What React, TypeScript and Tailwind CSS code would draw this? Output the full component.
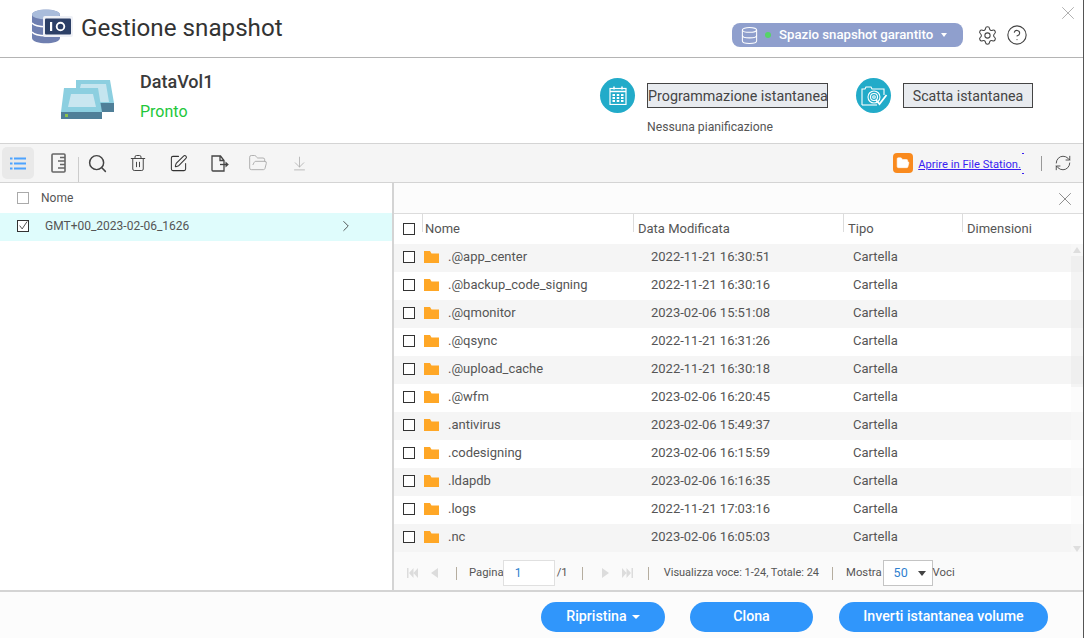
import React from "react";
import { Search, Trash2, SquarePen, FolderOpen, ArrowDownToLine, Settings, CircleHelp, X, Database, ChevronRight, RefreshCw } from "lucide-react";

const rows = [
  [".@app_center", "2022-11-21 16:30:51"],
  [".@backup_code_signing", "2022-11-21 16:30:16"],
  [".@qmonitor", "2023-02-06 15:51:08"],
  [".@qsync", "2022-11-21 16:31:26"],
  [".@upload_cache", "2022-11-21 16:30:18"],
  [".@wfm", "2023-02-06 16:20:45"],
  [".antivirus", "2023-02-06 15:49:37"],
  [".codesigning", "2023-02-06 16:15:59"],
  [".ldapdb", "2023-02-06 16:16:35"],
  [".logs", "2022-11-21 17:03:16"],
  [".nc", "2023-02-06 16:05:03"],
];

function Box() {
  return <span className="block w-[12px] h-[12px] border border-[#333] bg-white shrink-0" />;
}

function Folder() {
  return (
    <svg width="15" height="12" viewBox="0 0 15 12" className="block shrink-0">
      <path d="M0 0h6l1.500 2.500H15V12H0z" fill="#ffa726" />
    </svg>
  );
}

function AppLogo() {
  return (
    <svg width="42" height="35" viewBox="0 0 42 35" className="block">
      <path d="M1 6c0-7 28-7 28 0v23c0 7-28 7-28 0z" fill="#6f7fb0" />
      <ellipse cx="15" cy="5.500" rx="14" ry="5" fill="#a9bcdb" />
      <path d="M1 14c4 5 24 5 28 0M1 23c4 5 24 5 28 0" stroke="#fff" strokeWidth="1.400" fill="none" />
      <rect x="12" y="7" width="30" height="21" rx="2" fill="#eef0f6" />
      <rect x="14" y="9.500" width="26" height="16" rx="1" fill="#2c3f66" />
      <rect x="19" y="13" width="2.200" height="9" fill="#fff" />
      <circle cx="29.500" cy="17.500" r="3.800" fill="none" stroke="#fff" strokeWidth="1.900" />
    </svg>
  );
}

function VolumeIcon() {
  return (
    <svg width="54" height="41" viewBox="0 0 54 41" className="block">
      <path d="M15 1h34l4 23v9H39L37 9H15z" fill="#8ccfe0" />
      <path d="M20 5h25l3 18H38L36 9H19z" fill="#c5e5ef" />
      <rect x="39" y="24" width="14" height="9" fill="#4f7f98" />
      <path d="M3 9h34l4 24H0z" fill="#8ccfe0" />
      <path d="M10 15h22l3 13H7z" fill="#c9e6f0" />
      <rect x="0" y="33" width="41" height="7" fill="#4f7f98" />
      <rect x="4" y="35" width="3" height="3" fill="#8bc34a" />
    </svg>
  );
}

function CalendarIcon() {
  return (
    <svg width="18" height="19" viewBox="0 0 18 19" fill="none" className="block">
      <rect x="1" y="2.500" width="16" height="16" stroke="#fff" strokeWidth="1.200" />
      <path d="M1 5.500h16" stroke="#fff" strokeWidth="1.500" />
      <path d="M5 0.500v3M13 0.500v3" stroke="#fff" strokeWidth="1.500" />
      <path d="M3.500 8h2.500v2H3.500zM7.750 8h2.500v2h-2.500zM12 8h2.500v2H12zM3.500 11h2.500v2H3.500zM7.750 11h2.500v2h-2.500zM12 11h2.500v2H12zM3.500 14h2.500v2H3.500zM7.750 14h2.500v2h-2.500zM12 14h2.500v2H12z" fill="#fff" />
    </svg>
  );
}

function SnapIcon() {
  return (
    <svg width="28" height="22" viewBox="0 0 28 22" fill="none" stroke="#fff" strokeWidth="1.100" className="block">
      <path d="M2 20V4h3l1-2h5l1 2h12v6" />
      <path d="M2 20h15" />
      <circle cx="14" cy="12" r="6" />
      <circle cx="14" cy="12" r="3.500" />
      <circle cx="14" cy="12" r="1.300" />
      <path d="M16 15l3.500 4 7-9" strokeWidth="1.800" />
    </svg>
  );
}

function ListIcon() {
  return (
    <svg width="16" height="13" viewBox="0 0 16 13" fill="#4da3ff" className="block">
      <rect x="0" y="0.500" width="2.500" height="2" />
      <rect x="4" y="0.500" width="12" height="2" />
      <rect x="0" y="5.500" width="2.500" height="2" />
      <rect x="4" y="5.500" width="12" height="2" />
      <rect x="0" y="10.500" width="2.500" height="2" />
      <rect x="4" y="10.500" width="12" height="2" />
    </svg>
  );
}

function RulerIcon() {
  return (
    <svg width="15" height="20" viewBox="0 0 15 20" fill="none" stroke="#666" strokeWidth="1.600" className="block">
      <rect x="1" y="1" width="13" height="18" rx="1" />
      <path d="M9 4.500h5M7 8h7M9 11.500h5M7 15h7" />
    </svg>
  );
}

function ExportIcon() {
  return (
    <svg width="18" height="17" viewBox="0 0 18 17" fill="none" stroke="#444" strokeWidth="1.300" className="block">
      <path d="M13 5.500V16H2a1 1 0 0 1-1-1V1h8.500zM9 1v4.500h4" />
      <path d="M9 9.500h6" />
      <path d="M14.500 6.500l3.300 3-3.300 3z" fill="#444" stroke="none" />
    </svg>
  );
}

function Triangles({ dir, double }: { dir: "l" | "r"; double?: boolean }) {
  const p = dir === "l" ? "M7 0v10L0 5z" : "M0 0v10l7-5z";
  return (
    <svg width={double ? 11 : 7} height="10" viewBox={double ? "0 0 11 10" : "0 0 7 10"} fill="#dcdcdc" className="block">
      {double ? (
        dir === "l" ? (
          <>
            <rect x="0" y="0" width="1.500" height="10" />
            <path d="M6.500 0v10L2 5zM11 0v10L6.500 5z" />
          </>
        ) : (
          <>
            <path d="M0 0v10l4.500-5zM4.500 0v10L9 5z" />
            <rect x="9.500" y="0" width="1.500" height="10" />
          </>
        )
      ) : (
        <path d={p} />
      )}
    </svg>
  );
}

function Sep() {
  return <span className="block w-px h-[13px] bg-[#b5ad9f] shrink-0" />;
}

function Pill({ w, children }: { w: string; children: React.ReactNode }) {
  return (
    <button className={`${w} h-[30px] rounded-full bg-[#3096fb] text-white text-[14.200px] font-medium flex items-center justify-center`}>
      {children}
    </button>
  );
}

function ColLine() {
  return <span className="block w-px h-[18px] self-start bg-[#dcdcdc] shrink-0" />;
}

export default function App() {
  return (
    <div className="w-[1084px] h-[638px] overflow-hidden bg-white text-[#444] flex flex-col relative" style={{ fontFamily: "Roboto, sans-serif" }}>
      <X className="absolute right-[5px] top-[2px] text-[#aaa]" size={22} strokeWidth={1} />
      <span className="absolute right-0 top-0 bottom-0 w-px bg-[#555] z-10" />

      <header className="h-[58px] shrink-0 border-b border-[#b4b4b4] flex items-center pl-[31px] pr-[56px]">
        <span className="mt-[-4px]"><AppLogo /></span>
        <h1 className="ml-[8px] text-[24.200px] leading-none text-[#333] mt-[-1px]">Gestione snapshot</h1>
        <div className="ml-auto flex items-center mt-[13px]">
          <div className="w-[231px] h-[24px] rounded-[8px] bg-[#8f9fcd] flex items-center pl-[8px] text-white">
            <Database size={19} strokeWidth={1.300} />
            <span className="ml-[6px] w-[6px] h-[6px] rounded-full bg-[#55d468]" />
            <span className="ml-[8px] text-[13.200px] font-medium">Spazio snapshot garantito</span>
            <span className="ml-[8px] border-x-[3.500px] border-x-transparent border-t-[4px] border-t-white" />
          </div>
          <Settings className="ml-[14px] text-[#444]" size={21} strokeWidth={1.200} />
          <CircleHelp className="ml-[8px] text-[#444]" size={22} strokeWidth={1.200} />
        </div>
      </header>

      <section className="h-[86px] shrink-0 border-b border-[#d4d4d4] flex relative">
        <div className="ml-[61px] mt-[21px]"><VolumeIcon /></div>
        <div className="ml-[25px] mt-[12px]">
          <div className="text-[18px] font-medium leading-[24px] text-[#3a3a3a]">DataVol1</div>
          <div className="text-[16px] leading-[20px] mt-[8px] text-[#22c73a]">Pronto</div>
        </div>
        <div className="ml-auto mr-[51px] flex gap-[28px] mt-[20px]">
          <div className="flex items-start">
            <span className="w-[35px] h-[35px] rounded-full bg-[#22abc9] flex items-center justify-center"><CalendarIcon /></span>
            <div className="ml-[12px] mt-[5px]">
              <div className="w-[181px] h-[25px] border border-[#444] bg-[#e8ebef] text-[14.300px] leading-[24px] text-center text-[#444] whitespace-nowrap">Programmazione istantanea</div>
              <div className="text-[12.200px] leading-[14px] mt-[12px] text-[#555]">Nessuna pianificazione</div>
            </div>
          </div>
          <div className="flex items-start">
            <span className="w-[35px] h-[35px] rounded-full bg-[#22abc9] flex items-center justify-center"><SnapIcon /></span>
            <div className="ml-[12px] mt-[5px] w-[130px] h-[25px] border border-[#444] bg-[#e8ebef] text-[14.200px] leading-[24px] text-center text-[#444]">Scatta istantanea</div>
          </div>
        </div>
      </section>

      <div className="h-[39px] shrink-0 bg-[#f5f5f5] border-b border-[#d4d4d4] flex items-center">
        <span className="ml-[2px] w-[32px] h-[32px] rounded-[5px] bg-[#e9e9e9] flex items-center justify-center"><ListIcon /></span>
        <span className="w-[48px] flex justify-center"><RulerIcon /></span>
        <span className="w-px h-[25px] self-end bg-[#ccc] mr-[8px] ml-[-4px]" />
        <Search size={21} strokeWidth={1.700} className="text-[#444]" />
        <Trash2 size={18} strokeWidth={1.300} className="ml-[21px] text-[#444]" />
        <SquarePen size={19} strokeWidth={1.300} className="ml-[22px] text-[#333]" />
        <span className="ml-[23px]"><ExportIcon /></span>
        <FolderOpen size={20} strokeWidth={1.100} className="ml-[19px] text-[#aaa]" />
        <ArrowDownToLine size={17} strokeWidth={1.100} className="ml-[23px] text-[#aaa]" />
        <div className="ml-auto flex items-center mr-[12px]">
          <span className="w-[20px] h-[20px] rounded-[4px] bg-[#f98a1e] flex items-center justify-center">
            <FolderOpen size={14} className="text-white" fill="#fff" strokeWidth={1} />
          </span>
          <a className="ml-[5px] mt-[2px] text-[11.200px] leading-[13px] text-[#3a1ff2] underline whitespace-nowrap">Aprire in File Station.</a>
          <span className="ml-[1px] h-[21px] flex flex-col justify-between">
            <span className="block w-[2px] h-px bg-[#3a1ff2]" />
            <span className="block w-[2px] h-px bg-[#3a1ff2]" />
          </span>
          <span className="ml-[17px] w-px h-[15px] bg-[#999]" />
          <RefreshCw size={18} strokeWidth={1.200} className="ml-[12px] text-[#444]" />
        </div>
      </div>

      <main className="flex-1 flex min-h-0">
        <aside className="w-[392px] shrink-0">
          <div className="h-[30px] flex items-center pl-[17px] text-[12px] text-[#555]">
            <span className="block w-[12px] h-[12px] border border-[#aaa] bg-white" />
            <span className="ml-[12px]">Nome</span>
          </div>
          <div className="h-[28px] pb-[2px] bg-[#dffcfc] flex items-center pl-[17px] text-[12px] text-[#555]">
            <span className="w-[12px] h-[12px] border border-[#333] flex items-center justify-center bg-white">
              <svg width="12" height="12" viewBox="0 0 12 12" fill="none" stroke="#333" strokeWidth="1"><path d="M2 5.500l3 4 6-9" /></svg>
            </span>
            <span className="ml-[16px]">GMT+00_2023-02-06_1626</span>
            <ChevronRight size={18} strokeWidth={1.100} className="ml-auto mr-[37px] text-[#333]" />
          </div>
        </aside>

        <div className="flex-1 border-l-[2px] border-[#d4d4d4] flex flex-col min-w-0">
          <div className="h-[31px] shrink-0 bg-[#fcfcfc] border-b border-[#dcdcdc] flex items-center justify-end pr-[8px] pt-[2px]">
            <X size={22} strokeWidth={0.900} className="text-[#777]" />
          </div>
          <div className="h-[30px] shrink-0 flex items-center text-[13px] text-[#555]">
            <span className="w-[28px] flex shrink-0 pl-[9px]"><Box /></span>
            <ColLine />
            <span className="w-[210px] pl-[2px] shrink-0">Nome</span>
            <ColLine />
            <span className="w-[209px] pl-[4px] shrink-0">Data Modificata</span>
            <ColLine />
            <span className="w-[118px] pl-[4px] shrink-0">Tipo</span>
            <ColLine />
            <span className="flex-1 pl-[4px]">Dimensioni</span>
          </div>
          <div className="h-[308px] shrink-0 relative">
            {rows.map((r, i) => (
              <div key={r[0]} className={`h-[28px] pb-[3px] flex items-center text-[13px] text-[#555] ${i % 2 === 0 ? "bg-[#f5f5f5]" : "bg-white"}`}>
                <span className="w-[30px] flex shrink-0 pl-[9px]"><Box /></span>
                <span className="w-[24px] shrink-0"><Folder /></span>
                <span className="w-[203px] shrink-0">{r[0]}</span>
                <span className="w-[202px] shrink-0">{r[1]}</span>
                <span>Cartella</span>
              </div>
            ))}
            <div className="absolute right-0 top-0 bottom-0 w-[13px] bg-[#fafafa]/50">
              <span className="absolute left-[2px] top-[3px] border-x-[4px] border-x-transparent border-b-[6px] border-b-[#dedede]" />
              <span className="absolute left-0 right-[1px] top-[12px] h-[131px] bg-black/[0.03]" />
              <span className="absolute left-[2px] bottom-0 border-x-[4px] border-x-transparent border-t-[6px] border-t-[#dedede]" />
            </div>
          </div>
          <div className="flex-1 bg-[#fafafa] flex items-center pt-[4px] pl-[13px] text-[11.300px] text-[#555] whitespace-nowrap">
            <Triangles dir="l" double />
            <span className="ml-[13px]"><Triangles dir="l" /></span>
            <span className="ml-[18px]"><Sep /></span>
            <span className="ml-[12px]">Pagina</span>
            <span className="ml-[-1px] w-[52px] h-[26px] border border-[#e0e0e0] bg-white text-[#2f7fd0] text-[12px] leading-[24px] pl-[11px]">1</span>
            <span className="ml-[2px]">/1</span>
            <span className="ml-[14px]"><Sep /></span>
            <span className="ml-[19px]"><Triangles dir="r" /></span>
            <span className="ml-[13px]"><Triangles dir="r" double /></span>
            <span className="ml-[15px]"><Sep /></span>
            <span className="ml-[15px] text-[11px]">Visualizza voce: 1-24, Totale: 24</span>
            <span className="ml-[13px]"><Sep /></span>
            <span className="ml-[13px]">Mostra</span>
            <span className="ml-[1px] w-[50px] h-[26px] border border-[#c4c4c4] bg-white flex items-center pl-[10px] text-[#2f7fd0] text-[12.500px]">
              50
              <span className="ml-[10px] border-x-[4px] border-x-transparent border-t-[5px] border-t-[#444]" />
            </span>
            <span>Voci</span>
          </div>
        </div>
      </main>

      <footer className="h-[48px] shrink-0 border-t-[2px] border-[#d4d4d4] flex items-center pt-[4px] pl-[541px] bg-[#fcfcfc]">
        <Pill w="w-[124px]">
          Ripristina
          <span className="ml-[5px] border-x-[4px] border-x-transparent border-t-[4px] border-t-white" />
        </Pill>
        <span className="ml-[25px]"><Pill w="w-[123px]">Clona</Pill></span>
        <span className="ml-[26px]"><Pill w="w-[209px]">Inverti istantanea volume</Pill></span>
      </footer>
    </div>
  );
}
